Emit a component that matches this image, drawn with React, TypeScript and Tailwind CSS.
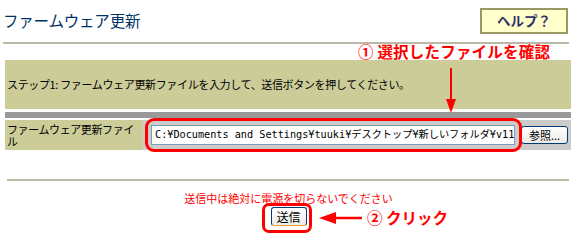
export default function App() {
  const jp = "font-['Noto_Sans_CJK_JP','Noto_Sans',sans-serif]";
  return (
    <div className={`relative w-[577px] h-[246px] bg-white text-black overflow-hidden ${jp}`}>
      {/* header */}
      <div className="flex h-[42px] items-center justify-between pl-[3px] pr-[9px]">
        <h1 className="text-[15.5px] leading-none text-[#003366] tracking-[-0.2px]">ファームウェア更新</h1>
        <button className="flex h-[26px] w-[88px] items-center justify-center border-2 border-[#999966] bg-[#ffffcc] text-[13.5px] font-bold leading-none text-[#333366]">
          ヘルプ？
        </button>
      </div>
      <div className="ml-[3px] mr-[8px] h-[2px] bg-[#bcb8a6]" />

      {/* step box */}
      <div className="ml-[5px] mr-[6px] mt-[16px]">
        <div className="flex h-[49px] items-center bg-[#cccc99] pl-[2px] text-[11px] leading-none tracking-[-0.35px]">
          ステップ1: ファームウェア更新ファイルを入力して、送信ボタンを押してください。
        </div>
        <div className="mt-[3px] h-[6px] bg-[#999999]" />
        <div className="mt-[2px] flex h-[30px]">
          <div className="flex w-[138px] items-center bg-[#cccc99] pl-[2px] text-[11px] leading-[12px] tracking-[-0.4px]">
            ファームウェア更新ファイル
          </div>
          <div className="flex flex-1 items-center bg-[#cccccc]">
            <div className="ml-[8px] flex h-[20px] w-[364px] items-center overflow-hidden whitespace-nowrap border border-[#7f9db9] bg-white pl-[3px] font-['DejaVu_Sans_Mono','Noto_Sans_CJK_JP',monospace] text-[10.2px] leading-none">
              C:¥Documents and Settings¥tuuki¥デスクトップ¥新しいフォルダ¥v11
            </div>
            <button className="ml-[6px] flex h-[18px] w-[47px] items-center justify-center rounded-[3px] border border-[#003c74] bg-gradient-to-b from-white to-[#ecebe6] text-[11px] leading-none">
              参照...
            </button>
          </div>
        </div>
      </div>

      {/* footer */}
      <div className="ml-[7px] mr-[8px] mt-[29px] h-[2px] bg-[#bcb8a6]" />
      <div className="mt-[12px] flex flex-col items-center">
        <p className="text-[11px] leading-none text-[#ff0000]">送信中は絶対に電源を切らないでください</p>
        <button className="mt-[3px] flex h-[19px] w-[36px] items-center justify-center rounded-[3px] border border-[#003c74] border-b-[#f0a030] bg-gradient-to-b from-white to-[#ecebe6] text-[12px] leading-none">
          送信
        </button>
      </div>

      {/* annotations */}
      <div className="absolute left-[358px] top-[44px] text-[15.5px] font-bold leading-none text-[#ff0000] tracking-[0.2px]">
        ① 選択したファイルを確認
      </div>
      <div className="absolute left-[145px] top-[118px] h-[34px] w-[377px] rounded-[9px] border-[3px] border-[#ff0000]" />
      <div className="absolute left-[262px] top-[203px] h-[30px] w-[50px] rounded-[7px] border-[3px] border-[#ff0000]" />
      <div className="absolute left-[367px] top-[210px] text-[15.5px] font-bold leading-none text-[#ff0000]">
        ② クリック
      </div>
      <svg className="pointer-events-none absolute left-0 top-0" width="577" height="246">
        <line x1="451" y1="68" x2="451" y2="100" stroke="#ff0000" strokeWidth="2" />
        <polygon points="446,99 456,99 451,113" fill="#ff0000" />
        <line x1="334" y1="218" x2="362" y2="218" stroke="#ff0000" strokeWidth="2.5" />
        <polygon points="319,218 336,212 336,224" fill="#ff0000" />
      </svg>
    </div>
  );
}
